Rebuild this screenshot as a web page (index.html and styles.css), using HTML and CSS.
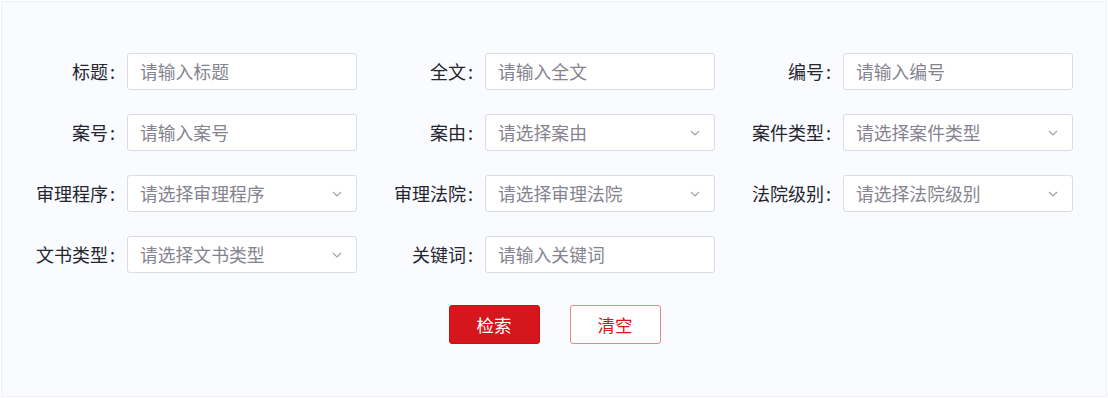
FILE: index.html
```html
<!DOCTYPE html>
<html lang="zh-CN">
<head>
<meta charset="utf-8">
<title>检索</title>
<link rel="stylesheet" href="styles.css">
</head>
<body>
<div class="page">
  <form class="search-form">
    <div class="grid">
      <div class="field"><label class="label">标题<span class="colon">:</span></label><div class="control"><span class="ph">请输入标题</span></div></div>
      <div class="field"><label class="label">全文<span class="colon">:</span></label><div class="control"><span class="ph">请输入全文</span></div></div>
      <div class="field"><label class="label">编号<span class="colon">:</span></label><div class="control"><span class="ph">请输入编号</span></div></div>

      <div class="field"><label class="label">案号<span class="colon">:</span></label><div class="control"><span class="ph">请输入案号</span></div></div>
      <div class="field"><label class="label">案由<span class="colon">:</span></label><div class="control select"><span class="ph">请选择案由</span><svg class="chev" viewBox="0 0 10 6"><path d="M1 1l4 4 4-4"/></svg></div></div>
      <div class="field"><label class="label">案件类型<span class="colon">:</span></label><div class="control select"><span class="ph">请选择案件类型</span><svg class="chev" viewBox="0 0 10 6"><path d="M1 1l4 4 4-4"/></svg></div></div>

      <div class="field"><label class="label">审理程序<span class="colon">:</span></label><div class="control select"><span class="ph">请选择审理程序</span><svg class="chev" viewBox="0 0 10 6"><path d="M1 1l4 4 4-4"/></svg></div></div>
      <div class="field"><label class="label">审理法院<span class="colon">:</span></label><div class="control select"><span class="ph">请选择审理法院</span><svg class="chev" viewBox="0 0 10 6"><path d="M1 1l4 4 4-4"/></svg></div></div>
      <div class="field"><label class="label">法院级别<span class="colon">:</span></label><div class="control select"><span class="ph">请选择法院级别</span><svg class="chev" viewBox="0 0 10 6"><path d="M1 1l4 4 4-4"/></svg></div></div>

      <div class="field"><label class="label">文书类型<span class="colon">:</span></label><div class="control select"><span class="ph">请选择文书类型</span><svg class="chev" viewBox="0 0 10 6"><path d="M1 1l4 4 4-4"/></svg></div></div>
      <div class="field"><label class="label">关键词<span class="colon">:</span></label><div class="control"><span class="ph">请输入关键词</span></div></div>
    </div>
    <div class="actions">
      <button type="button" class="btn btn-primary">检索</button>
      <button type="button" class="btn btn-outline">清空</button>
    </div>
  </form>
</div>
</body>
</html>
```
FILE: styles.css
```css
* { box-sizing: border-box; }
html, body { margin: 0; padding: 0; }
body {
  width: 1108px;
  height: 398px;
  background: #ffffff;
  font-family: "Noto Sans CJK SC", "Noto Sans", sans-serif;
  overflow: hidden;
}
.page {
  width: 1106px;
  height: 396px;
  margin: 1px;
  background: #f9fbfe;
  border: 1px solid #eef1f6;
}
.search-form {
  padding: 51px 0 0 14px;
}
.grid {
  display: grid;
  grid-template-columns: repeat(3, 341px);
  column-gap: 17px;
  row-gap: 24.5px;
}
.field {
  display: flex;
  align-items: center;
  height: 36.5px;
}
.label {
  width: 100px;
  margin-right: 11px;
  text-align: right;
  font-size: 18px;
  color: #25252e;
  white-space: nowrap;
}
.colon {
  margin-left: 2px;
  margin-right: 1px;
}
.control {
  position: relative;
  width: 230px;
  height: 36.5px;
  background: #ffffff;
  border: 1px solid #d9dce3;
  border-radius: 3px;
  display: flex;
  align-items: center;
  padding-left: 12px;
}
.ph {
  font-size: 17.8px;
  color: #85838f;
  white-space: nowrap;
}
.chev {
  position: absolute;
  right: 14px;
  top: 15px;
  width: 10px;
  height: 6px;
  fill: none;
  stroke: #a0a3ad;
  stroke-width: 1.2;
}
.actions {
  display: flex;
  justify-content: center;
  gap: 30px;
  margin-top: 32px;
  padding-right: 13px;
}
.btn {
  width: 91px;
  height: 39px;
  border-radius: 3px;
  font-family: "Noto Sans CJK SC", "Noto Sans", sans-serif;
  font-size: 17.5px;
  padding: 0;
  cursor: pointer;
}
.btn-primary {
  background: #d5161d;
  border: 1px solid #cc1016;
  color: #ffffff;
}
.btn-outline {
  background: #ffffff;
  border: 1px solid #dc8a8e;
  color: #d5161d;
}
```
